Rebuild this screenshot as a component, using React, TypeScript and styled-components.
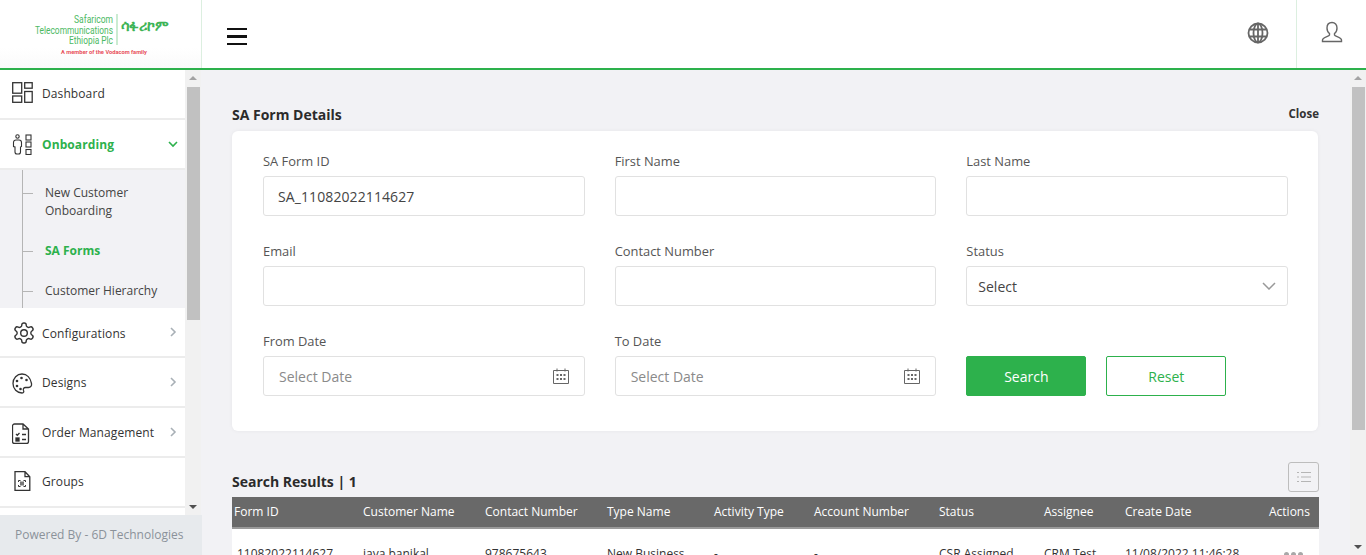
import React from "react";
import styled, { createGlobalStyle } from "styled-components";

const Global = createGlobalStyle`
  html, body { margin: 0; padding: 0; height: 100%; overflow: hidden; }
  body { font-family: "Open Sans", "Liberation Sans", sans-serif; color: #333; background: #f2f2f5; }
  #root { height: 100%; }
  * { box-sizing: border-box; }
`;

const Page = styled.div`
  display: flex;
  flex-direction: column;
  width: 1366px;
  height: 555px;
  overflow: hidden;
`;
const Header = styled.header`
  flex: none;
  display: flex;
  align-items: stretch;
  height: 70px;
  background: #fff;
  border-bottom: 2px solid #2db14c;
`;
const LogoBox = styled.div`
  flex: none;
  width: 202px;
  border-right: 1px solid #dcefe0;
  background: linear-gradient(#fff 70%, #fafafa);
  display: flex;
  align-items: center;
  justify-content: center;
`;
const MenuButton = styled.div`
  flex: none;
  width: 24px;
  margin-left: 25px;
  padding-top: 5px;
  display: flex;
  flex-direction: column;
  justify-content: center;
  gap: 5px;
`;
const MenuBar = styled.span`
  display: block;
  height: 2.4px;
  width: 20px;
  background: #111;
`;
const HeaderRight = styled.div`
  margin-left: auto;
  display: flex;
  align-items: stretch;
`;
const GlobeBox = styled.div`
  width: 77px;
  display: flex;
  align-items: center;
  padding-left: 28px;
  padding-bottom: 2px;
`;
const UserBox = styled.div`
  width: 70px;
  border-left: 1px solid #dcefe0;
  display: flex;
  align-items: center;
  padding-left: 24px;
  padding-bottom: 4px;
`;
const Body = styled.div`
  flex: 1;
  min-height: 0;
  display: flex;
`;
const Sidebar = styled.aside`
  flex: none;
  width: 202px;
  display: flex;
  flex-direction: column;
`;
const SideTop = styled.div`
  flex: 1;
  min-height: 0;
  display: flex;
`;
const Nav = styled.nav`
  flex: none;
  width: 185px;
  background: #fff;
  overflow: hidden;
`;
const NavItem = styled.div<{ $h?: number; $active?: boolean }>`
  height: ${(p) => p.$h ?? 50}px;
  display: flex;
  align-items: center;
  padding: 0 7px 0 12px;
  border-bottom: 2px solid #ececec;
  font-size: 12px;
  letter-spacing: 0.1px;
  color: ${(p) => (p.$active ? "#2db14c" : "#333")};
  font-weight: ${(p) => (p.$active ? 700 : 400)};
`;
const NavIcon = styled.span<{ $up?: number; $down?: number }>`
  flex: none;
  width: 30px;
  display: flex;
  align-items: center;
  padding-bottom: ${(p) => (p.$up ?? 0) * 2}px;
  padding-top: ${(p) => (p.$down ?? 0) * 2}px;
`;
const NavLabel = styled.span<{ $up?: boolean; $down?: boolean }>`
  flex: 1;
  white-space: nowrap;
  padding-bottom: ${(p) => (p.$up ? 2 : 0)}px;
  padding-top: ${(p) => (p.$down ? 2 : 0)}px;
`;
const SubMenu = styled.div`
  position: relative;
  height: 138px;
  background: #f2f2f5;
  padding: 14px 0 0 45px;
  font-size: 12px;
  line-height: 18px;
  color: #444;
  &::before {
    content: "";
    position: absolute;
    left: 22px;
    top: 0;
    bottom: 0;
    width: 1px;
    background: #b5b5b5;
  }
`;
const SubItem = styled.div<{ $active?: boolean; $mb: number }>`
  position: relative;
  margin-bottom: ${(p) => p.$mb}px;
  color: ${(p) => (p.$active ? "#2db14c" : "#444")};
  font-weight: ${(p) => (p.$active ? 700 : 400)};
  &::before {
    content: "";
    position: absolute;
    left: -22px;
    top: 9px;
    width: 10px;
    height: 1px;
    background: #b5b5b5;
  }
`;
const Track = styled.div`
  flex: none;
  width: 16px;
  background: #f1f1f1;
  display: flex;
  flex-direction: column;
  align-items: center;
  justify-content: space-between;
  position: relative;
`;
const Thumb = styled.div<{ $top: number; $h: number }>`
  position: absolute;
  top: ${(p) => p.$top}px;
  left: 2px;
  right: 1px;
  height: ${(p) => p.$h}px;
  background: #c1c1c1;
`;
const ArrowUp = styled.span`
  margin-top: 6px;
  width: 0;
  height: 0;
  border: 4px solid transparent;
  border-top: 0;
  border-bottom: 4px solid #a3a3a3;
`;
const ArrowDown = styled.span`
  margin-bottom: 6px;
  width: 0;
  height: 0;
  border: 4px solid transparent;
  border-bottom: 0;
  border-top: 4px solid #505050;
`;
const SideFooter = styled.div`
  flex: none;
  height: 40px;
  background: #e7eaed;
  color: #8b929a;
  font-size: 12px;
  display: flex;
  align-items: center;
  padding: 0 0 2px 15px;
`;
const Main = styled.main`
  flex: 1;
  min-width: 0;
  display: flex;
  background: #f2f2f5;
`;
const Content = styled.div`
  flex: 1;
  min-width: 0;
  overflow: hidden;
  padding: 33px 32px 0 30px;
`;
const TitleRow = styled.div`
  display: flex;
  justify-content: space-between;
  align-items: center;
  height: 22px;
  margin-bottom: 6px;
`;
const Title = styled.h2`
  margin: 0;
  font-size: 14px;
  font-weight: 700;
  color: #2b2b2b;
`;
const Close = styled.span`
  font-size: 11.5px;
  font-weight: 700;
  color: #333;
  margin: -2px -1px 0 0;
`;
const Card = styled.section`
  height: 300px;
  background: #fff;
  border-radius: 6px;
  box-shadow: 0 0 4px rgba(0, 0, 0, 0.05);
  padding: 21px 30px 0 31px;
  display: grid;
  grid-template-columns: repeat(3, 1fr);
  column-gap: 30px;
  align-content: start;
  grid-template-rows: 90px 90px 90px;
`;
const Field = styled.div`
  display: flex;
  flex-direction: column;
`;
const Label = styled.label`
  font-size: 12.9px;
  line-height: 18px;
  height: 24px;
  color: #555;
`;
const InputBox = styled.div<{ $pad?: number }>`
  height: 40px;
  border: 1px solid #e1e1e1;
  border-radius: 3px;
  background: #fff;
  display: flex;
  align-items: center;
  justify-content: space-between;
  padding: 0 ${(p) => p.$pad ?? 15}px;
  font-size: 14px;
  color: #444;
`;
const Value = styled.span`
  margin-left: -1px;
  letter-spacing: 0.1px;
`;
const Placeholder = styled.span`
  color: #8a8a8a;
`;
const Buttons = styled.div`
  display: flex;
  gap: 20px;
  padding-top: 24px;
`;
const Btn = styled.button<{ $solid?: boolean }>`
  width: 120px;
  height: 40px;
  border-radius: 2px;
  border: 1px solid #2db14c;
  background: ${(p) => (p.$solid ? "#2db14c" : "#fff")};
  color: ${(p) => (p.$solid ? "#fff" : "#2db14c")};
  font: 400 14px "Open Sans", sans-serif;
`;
const ResultsRow = styled.div`
  display: flex;
  justify-content: space-between;
  align-items: flex-start;
  height: 35px;
  margin-top: 31px;
  margin-right: -1px;
`;
const ResultsTitle = styled.h3`
  margin: 10px 0 0;
  font-size: 14px;
  line-height: 20px;
  font-weight: 700;
  color: #2b2b2b;
`;
const ListBtn = styled.div`
  width: 31px;
  height: 30px;
  border: 1px solid #bdbdbd;
  border-radius: 3px;
  display: flex;
  align-items: center;
  justify-content: center;
`;
const Row = styled.div`
  display: grid;
  grid-template-columns: 131px 122px 122px 107px 100px 125px 105px 81px 1fr 50px;
  margin-right: -1px;
`;
const HeadRow = styled(Row)`
  background: #696969;
  height: 32px;
  border-bottom: 2px solid #9a9a9a;
  color: #fff;
  font-size: 12px;
  align-items: center;
`;
const HeadCell = styled.div<{ $first?: boolean }>`
  white-space: nowrap;
  padding: 0 0 2px ${(p) => (p.$first ? 2 : 0)}px;
`;
const DataRow = styled(Row)`
  background: #fff;
  height: 60px;
  padding-top: 16px;
  font-size: 12px;
  color: #333;
`;
const DataCell = styled.div<{ $first?: boolean }>`
  white-space: nowrap;
  padding-left: ${(p) => (p.$first ? 5 : 0)}px;
`;
const Dots = styled.div`
  display: flex;
  gap: 2px;
  padding: 7px 0 0 15px;
`;
const Dot = styled.span`
  width: 5px;
  height: 5px;
  border-radius: 50%;
  background: #a8a8a8;
`;

const Logo = () => (
  <svg width="150" height="46" viewBox="0 0 150 46">
    <g fill="#4cb963" fontFamily="Roboto, sans-serif" fontSize="11" textAnchor="end">
      <text x="87" y="11.500" textLength="39" lengthAdjust="spacingAndGlyphs">Safaricom</text>
      <text x="87" y="22.500" textLength="78" lengthAdjust="spacingAndGlyphs">Telecommunications</text>
      <text x="87" y="33" textLength="44" lengthAdjust="spacingAndGlyphs">Ethiopia Plc</text>
    </g>
    <line x1="91" y1="3" x2="91" y2="34" stroke="#6cc77f" strokeWidth="0.7" />
    <text x="95" y="19.500" fill="#3eb457" fontFamily="'DejaVu Sans', 'Noto Sans', sans-serif" fontSize="14" fontWeight="700" textLength="48" lengthAdjust="spacingAndGlyphs">ሳፋሪኮም</text>
    <text x="35" y="42.500" fill="#e8505b" fontFamily="Roboto, sans-serif" fontSize="5.500" fontWeight="700" textLength="86" lengthAdjust="spacingAndGlyphs">A member of the Vodacom family</text>
  </svg>
);
const s = { fill: "none", stroke: "#333", strokeWidth: 1.3 } as const;
const DashIcon = () => (
  <svg width="21" height="21" viewBox="0 0 21 21" {...s}>
    <rect x="0.700" y="0.700" width="9" height="10.500" /><rect x="12.700" y="0.700" width="7.500" height="5.500" />
    <rect x="0.700" y="14" width="9" height="6.300" /><rect x="12.700" y="9.500" width="7.500" height="10.800" />
  </svg>
);
const OnboardIcon = () => (
  <svg width="21" height="21" viewBox="0 0 21 21" {...s} strokeWidth={1.1}>
    <circle cx="5.500" cy="2.500" r="1.700" />
    <path d="M1.500 12.500V8.500a2.500 2.500 0 0 1 2.500-2.500h3a2.500 2.500 0 0 1 2.500 2.500v4l-1 .5V18a2 2 0 0 1-2 2h-1.500a2 2 0 0 1-2-2v-5z" />
    <rect x="14" y="1" width="5" height="5" /><rect x="14" y="8" width="5" height="5" /><rect x="14" y="15.500" width="5" height="5" />
  </svg>
);
const GearIcon = () => (
  <svg width="24" height="24" viewBox="0 0 24 24" {...s} strokeWidth={1.4} strokeLinejoin="round">
    <path d="M12.220 2h-.44a2 2 0 0 0-2 2v.18a2 2 0 0 1-1 1.730l-.43.250a2 2 0 0 1-2 0l-.150-.080a2 2 0 0 0-2.730.730l-.220.380a2 2 0 0 0 .730 2.730l.150.100a2 2 0 0 1 1 1.720v.510a2 2 0 0 1-1 1.740l-.150.090a2 2 0 0 0-.730 2.730l.220.380a2 2 0 0 0 2.730.730l.150-.080a2 2 0 0 1 2 0l.430.250a2 2 0 0 1 1 1.730V20a2 2 0 0 0 2 2h.44a2 2 0 0 0 2-2v-.18a2 2 0 0 1 1-1.730l.430-.250a2 2 0 0 1 2 0l.150.080a2 2 0 0 0 2.730-.730l.220-.390a2 2 0 0 0-.730-2.730l-.150-.080a2 2 0 0 1-1-1.740v-.500a2 2 0 0 1 1-1.740l.150-.090a2 2 0 0 0 .730-2.730l-.220-.380a2 2 0 0 0-2.730-.730l-.150.080a2 2 0 0 1-2 0l-.430-.250a2 2 0 0 1-1-1.730V4a2 2 0 0 0-2-2z" />
    <circle cx="12" cy="12" r="3.300" />
  </svg>
);
const PaletteIcon = () => (
  <svg width="21" height="21" viewBox="0 0 21 21">
    <path d="M10 1C5 1 1 5 1 10.500S5 20 10 20c2 0 2-1.500 1.500-2.500-.7-1.500.3-3 2-3h3c2 0 3.500-1.500 3-4C18.500 5 15 1 10 1z" fill="none" stroke="#333" strokeWidth="1.300" />
    <circle cx="5" cy="8" r="1.300" fill="#333" /><circle cx="9.500" cy="5" r="1.300" fill="#333" />
    <circle cx="14.500" cy="7" r="1.300" fill="#333" /><circle cx="5" cy="13" r="1.300" fill="#333" /><circle cx="8.500" cy="16" r="1.300" fill="#333" />
  </svg>
);
const OrderIcon = () => (
  <svg width="18" height="21" viewBox="0 0 18 21" {...s}>
    <path d="M2.500 1H11l5.500 5v12.500a2 2 0 0 1-2 2h-12a2 2 0 0 1-2-2V3a2 2 0 0 1 2-2zM11 1v5h5.500" />
    <path d="M4 11l1.300 1.300L7.500 10M10 11.500h4M10 16.500h4" /><rect x="4" y="15" width="3" height="3" fill="#333" />
  </svg>
);
const GroupsIcon = () => (
  <svg width="17" height="20" viewBox="0 0 17 20" {...s} style={{ marginLeft: 2 }}>
    <path d="M1 .700h10l4.800 5v13.600H1zM11 .700v5h4.800" />
    <path d="M4.500 11V9.500h2M9.500 9.500h2V11M4.500 14v1.500h2M9.500 15.500h2V14" strokeWidth="1" />
    <rect x="6" y="10.500" width="4" height="4" fill="#777" stroke="none" />
  </svg>
);
const Chevron = ({ open }: { open?: boolean }) => (
  <svg width="10" height="10" viewBox="0 0 10 10" fill="none" stroke={open ? "#2db14c" : "#a8b0b6"} strokeWidth="1.600">
    {open ? <path d="M1 3l4 4 4-4" /> : <path d="M3 1l4 4-4 4" />}
  </svg>
);
const Calendar = () => (
  <svg width="16" height="16" viewBox="0 0 16 16" fill="none" stroke="#666">
    <path d="M.5 2.500h15v13H.5zM4 .5v3M12 .5v3" />
    <g fill="#666" stroke="none">
      <rect x="3.500" y="6" width="2" height="2" /><rect x="7" y="6" width="2" height="2" /><rect x="10.500" y="6" width="2" height="2" />
      <rect x="3.500" y="10" width="2" height="2" /><rect x="7" y="10" width="2" height="2" /><rect x="10.500" y="10" width="2" height="2" />
    </g>
  </svg>
);
const Globe = () => (
  <svg width="22" height="22" viewBox="0 0 22 22" fill="none" stroke="#666" strokeWidth="1.800">
    <circle cx="11" cy="11" r="9.500" />
    <ellipse cx="11" cy="11" rx="4.500" ry="9.500" />
    <path d="M2 7.500h18M2 14.500h18M11 1.500v19" />
  </svg>
);
const User = () => (
  <svg width="22" height="22" viewBox="0 0 22 22" fill="none" stroke="#666" strokeWidth="1.400">
    <path d="M11 1.500c-3 0-5 2.200-5 5.500 0 2.500 1 4.500 2.500 5.500v1.500C8 15.500 1.500 16 1.500 19v1.500h19V19c0-3-6.500-3.500-7-5v-1.500c1.500-1 2.500-3 2.500-5.500 0-3.300-2-5.500-5-5.500z" />
  </svg>
);
const ListIcon = () => (
  <svg width="14" height="12" viewBox="0 0 14 12" stroke="#b5b5b5" strokeWidth="1">
    <path d="M0 1.500h2M4 1.500h10M0 6h2M4 6h10M0 10.500h2M4 10.500h10" />
  </svg>
);
const SelectChevron = () => (
  <svg width="14" height="8" viewBox="0 0 14 8" fill="none" stroke="#999" strokeWidth="1.500">
    <path d="M1 1l6 6 6-6" />
  </svg>
);

const heads = ["Form ID", "Customer Name", "Contact Number", "Type Name", "Activity Type", "Account Number", "Status", "Assignee", "Create Date"];
const cells = ["11082022114627", "jaya banikal", "978675643", "New Business", "-", "-", "CSR Assigned", "CRM Test", "11/08/2022 11:46:28"];

export default function App() {
  return (
    <Page>
      <Global />
      <Header>
        <LogoBox><Logo /></LogoBox>
        <MenuButton><MenuBar /><MenuBar /><MenuBar /></MenuButton>
        <HeaderRight>
          <GlobeBox><Globe /></GlobeBox>
          <UserBox><User /></UserBox>
        </HeaderRight>
      </Header>
      <Body>
        <Sidebar>
          <SideTop>
            <Nav>
              <NavItem><NavIcon $up={2}><DashIcon /></NavIcon><NavLabel $up>Dashboard</NavLabel></NavItem>
              <NavItem $active><NavIcon><OnboardIcon /></NavIcon><NavLabel>Onboarding</NavLabel><Chevron open /></NavItem>
              <SubMenu>
                <SubItem $mb={22}>New Customer<br />Onboarding</SubItem>
                <SubItem $mb={22} $active>SA Forms</SubItem>
                <SubItem $mb={0}>Customer Hierarchy</SubItem>
              </SubMenu>
              <NavItem><NavIcon $down={1}><GearIcon /></NavIcon><NavLabel $down>Configurations</NavLabel><Chevron /></NavItem>
              <NavItem><NavIcon $down={1}><PaletteIcon /></NavIcon><NavLabel>Designs</NavLabel><Chevron /></NavItem>
              <NavItem><NavIcon $down={1}><OrderIcon /></NavIcon><NavLabel>Order Management</NavLabel><Chevron /></NavItem>
              <NavItem><NavIcon $up={1}><GroupsIcon /></NavIcon><NavLabel $up>Groups</NavLabel></NavItem>
            </Nav>
            <Track>
              <ArrowUp />
              <Thumb $top={17} $h={233} />
              <ArrowDown />
            </Track>
          </SideTop>
          <SideFooter>Powered By - 6D Technologies</SideFooter>
        </Sidebar>
        <Main>
          <Content>
            <TitleRow><Title>SA Form Details</Title><Close>Close</Close></TitleRow>
            <Card>
              <Field><Label>SA Form ID</Label><InputBox><Value>SA_11082022114627</Value></InputBox></Field>
              <Field><Label>First Name</Label><InputBox /></Field>
              <Field><Label>Last Name</Label><InputBox /></Field>
              <Field><Label>Email</Label><InputBox /></Field>
              <Field><Label>Contact Number</Label><InputBox /></Field>
              <Field><Label>Status</Label><InputBox $pad={11}>Select<SelectChevron /></InputBox></Field>
              <Field><Label>From Date</Label><InputBox><Placeholder>Select Date</Placeholder><Calendar /></InputBox></Field>
              <Field><Label>To Date</Label><InputBox><Placeholder>Select Date</Placeholder><Calendar /></InputBox></Field>
              <Buttons><Btn $solid>Search</Btn><Btn>Reset</Btn></Buttons>
            </Card>
            <ResultsRow>
              <ResultsTitle>Search Results | 1</ResultsTitle>
              <ListBtn><ListIcon /></ListBtn>
            </ResultsRow>
            <HeadRow>
              {heads.map((h, i) => <HeadCell key={h} $first={i === 0}>{h}</HeadCell>)}
              <HeadCell>Actions</HeadCell>
            </HeadRow>
            <DataRow>
              {cells.map((c, i) => <DataCell key={i} $first={i === 0}>{c}</DataCell>)}
              <Dots><Dot /><Dot /><Dot /></Dots>
            </DataRow>
          </Content>
          <Track>
            <ArrowUp />
            <Thumb $top={17} $h={343} />
            <ArrowDown />
          </Track>
        </Main>
      </Body>
    </Page>
  );
}
